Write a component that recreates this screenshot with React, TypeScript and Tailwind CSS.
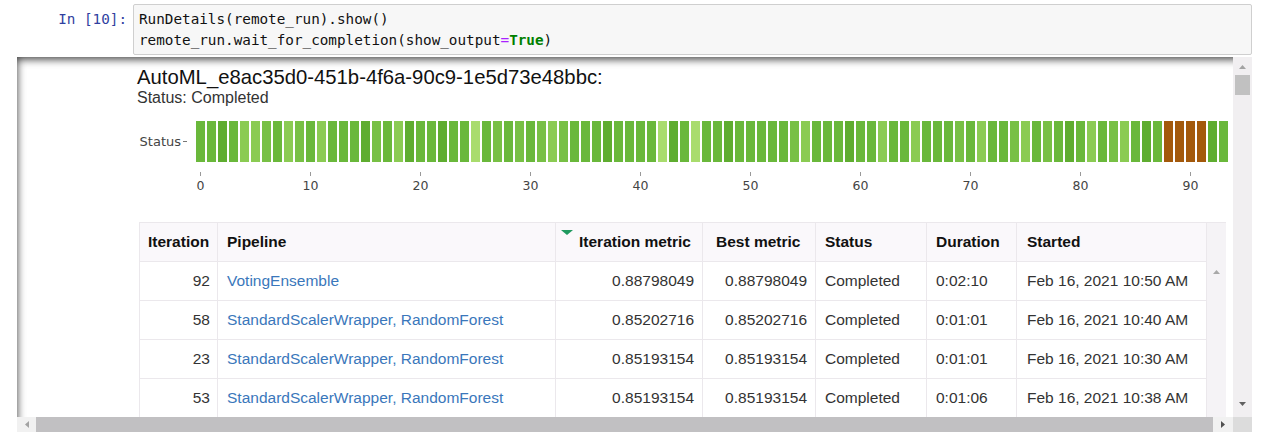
const SHADES: Record<string, string> = {
  d: "bg-[#5fad30]",
  m: "bg-[#6ab83b]",
  g: "bg-[#78c045]",
  l: "bg-[#8bcb53]",
  L: "bg-[#a9dc6d]",
  b: "bg-[#a3590b]",
};

// one letter per iteration, 0..93
const PATTERN =
  "mmdmllgmlg" +
  "mlmmmdgmld" +
  "mmdmmLmgmg" +
  "mglgmmmdmm" +
  "mmLdmLmmdm" +
  "mmmmglmmmd" +
  "mmlmmlmmmg" +
  "mlmmglmgmd" +
  "mlmglmdmbb" +
  "bbdm";

const bars = PATTERN.split("");

const rows = [
  { it: 92, pipe: "VotingEnsemble", m: "0.88798049", best: "0.88798049", dur: "0:02:10", start: "Feb 16, 2021 10:50 AM" },
  { it: 58, pipe: "StandardScalerWrapper, RandomForest", m: "0.85202716", best: "0.85202716", dur: "0:01:01", start: "Feb 16, 2021 10:40 AM" },
  { it: 23, pipe: "StandardScalerWrapper, RandomForest", m: "0.85193154", best: "0.85193154", dur: "0:01:01", start: "Feb 16, 2021 10:30 AM" },
  { it: 53, pipe: "StandardScalerWrapper, RandomForest", m: "0.85193154", best: "0.85193154", dur: "0:01:06", start: "Feb 16, 2021 10:38 AM" },
];

const COLS = "grid grid-cols-[78px_338px_147px_113px_111px_90px_190px]";
const CELL = "flex items-center border-r border-b border-[#ebe8ec]";

function Tri({ dir, color }: { dir: "up" | "down" | "left" | "right"; color: string }) {
  const pts = {
    up: "0,4 3.5,0 7,4",
    down: "0,0 7,0 3.5,4",
    left: "4,0 4,7 0,3.5",
    right: "0,0 0,7 4,3.5",
  }[dir];
  const vert = dir === "up" || dir === "down";
  return (
    <svg width={vert ? 7 : 4} height={vert ? 4 : 7} viewBox={vert ? "0 0 7 4" : "0 0 4 7"}>
      <polygon points={pts} fill={color} />
    </svg>
  );
}

export default function App() {
  return (
    <div className="w-[1263px] h-[438px] bg-white overflow-hidden font-['Liberation_Sans',Arial,sans-serif] text-[#333]">
      {/* input cell */}
      <div className="flex pt-[4px]">
        <div className="w-[133px] shrink-0 pr-[6px] pt-[5px] text-right font-['DejaVu_Sans_Mono',monospace] text-[14.3px] leading-[21px] text-[#303f9f] whitespace-pre">
          In [10]:
        </div>
        <div className="w-[1119px] h-[51px] rounded-[2px] border border-[#cfcfcf] bg-[#f7f7f7] pl-[5px] pt-[4px] font-['DejaVu_Sans_Mono',monospace] text-[14.3px] leading-[21px] text-[#111]">
          <div>RunDetails(remote_run).show()</div>
          <div>
            remote_run.wait_for_completion(show_output<span className="text-[#aa22ff]">=</span>
            <span className="font-bold text-[#008000]">True</span>)
          </div>
        </div>
      </div>

      {/* output area */}
      <div className="mt-[2px] ml-[17px] w-[1235px] h-[375px] flex flex-col shadow-[inset_0_2px_8px_rgba(0,0,0,0.8)]">
        <div className="flex h-[360px]">
          <div className="w-[1216px] h-full overflow-hidden pl-[120px] pt-[8px]">
            <div className="text-[20.3px] leading-[24px] text-[#111]">AutoML_e8ac35d0-451b-4f6a-90c9-1e5d73e48bbc:</div>
            <div className="text-[16px] leading-[17px] text-[#333]">Status: Completed</div>

            {/* status chart */}
            <div className="mt-[15px] flex h-[41px] items-center">
              <div className="w-[59px] flex items-center justify-end gap-[2px] pr-[9px] font-['DejaVu_Sans',sans-serif] text-[13px] text-[#444]">
                <span>Status</span>
                <span className="w-[4px] h-px bg-[#777]" />
              </div>
              <div className="flex h-full gap-[2px]">
                {bars.map((c, i) => (
                  <div key={i} className={`w-[9px] h-full ${SHADES[c]}`} />
                ))}
              </div>
            </div>
            <div className="ml-[59px] mt-[10px] flex gap-[2px] h-[22px]">
              {bars.map((_, i) => (
                <div key={i} className="w-[9px] flex flex-col items-center">
                  {i % 10 === 0 && (
                    <>
                      <div className="w-px h-[4px] bg-[#999]" />
                      <div className="mt-[2px] whitespace-nowrap font-['DejaVu_Sans',sans-serif] text-[12.5px] leading-[16px] text-[#444]">
                        {i}
                      </div>
                    </>
                  )}
                </div>
              ))}
            </div>

            {/* runs table */}
            <div className="ml-[2px] mt-[28px] flex w-[1087px] text-[15.5px]">
              <div className="w-[1068px] border-l border-t border-[#ebe8ec]">
                <div className={`${COLS} h-[39px] bg-[#faf8fb] font-bold text-[#111]`}>
                  <div className={`${CELL} pl-[8px]`}>Iteration</div>
                  <div className={`${CELL} pl-[9px]`}>Pipeline</div>
                  <div className={`${CELL} relative justify-end pr-[11px]`}>
                    <svg className="absolute left-[5px] top-[7px]" width="12" height="5" viewBox="0 0 12 5">
                      <polygon points="0,0 12,0 6,5" fill="#1f9a5f" />
                    </svg>
                    Iteration metric
                  </div>
                  <div className={`${CELL} pl-[13px]`}>Best metric</div>
                  <div className={`${CELL} pl-[9px]`}>Status</div>
                  <div className={`${CELL} pl-[9px]`}>Duration</div>
                  <div className={`${CELL} pl-[10px]`}>Started</div>
                </div>
                {rows.map((r) => (
                  <div key={r.it} className={`${COLS} h-[39px] bg-white`}>
                    <div className={`${CELL} justify-end pr-[7px]`}>{r.it}</div>
                    <div className={`${CELL} pl-[9px] text-[#3a77bb]`}>{r.pipe}</div>
                    <div className={`${CELL} justify-end pr-[8px]`}>{r.m}</div>
                    <div className={`${CELL} justify-end pr-[8px]`}>{r.best}</div>
                    <div className={`${CELL} pl-[9px]`}>Completed</div>
                    <div className={`${CELL} pl-[9px]`}>{r.dur}</div>
                    <div className={`${CELL} pl-[10px]`}>{r.start}</div>
                  </div>
                ))}
              </div>
              <div className="w-[19px] border-t border-[#ebe8ec] bg-[#f5f3f6] flex justify-center pt-[47px] h-[200px]">
                <Tri dir="up" color="#a8a8a8" />
              </div>
            </div>
          </div>

          {/* outer vertical scrollbar */}
          <div className="w-[19px] h-full bg-[#f1eff1] flex flex-col items-center pt-[8px] pb-[11px]">
            <Tri dir="up" color="#a3a3a3" />
            <div className="mt-[6px] w-[15px] h-[20px] bg-[#c1c1c1]" />
            <div className="flex-1" />
            <Tri dir="down" color="#606060" />
          </div>
        </div>

        {/* horizontal scrollbar */}
        <div className="flex h-[15px]">
          <div className="w-[1216px] flex bg-[#f1f1f1]">
            <div className="w-[19px] flex items-center justify-center">
              <Tri dir="left" color="#a3a3a3" />
            </div>
            <div className="w-[1177px] h-full bg-[#c1c0c2]" />
            <div className="w-[20px] flex items-center justify-center">
              <Tri dir="right" color="#505050" />
            </div>
          </div>
          <div className="w-[19px] bg-[#dcdcdc]" />
        </div>
      </div>
    </div>
  );
}
